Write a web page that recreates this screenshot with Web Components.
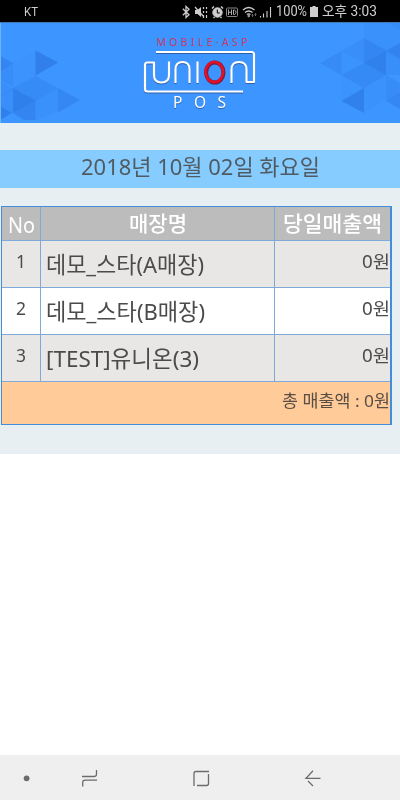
<!DOCTYPE html>
<html lang="ko"><head><meta charset="utf-8"><title>UNION POS</title>
<style>
html,body{margin:0;background:#fff}
body{width:400px;height:800px;overflow:hidden;font-family:"Noto Sans","Noto Sans CJK KR",sans-serif}
</style></head><body><pos-app></pos-app>
<script>
function define(name, html){
  const t=document.createElement('template'); t.innerHTML=html;
  customElements.define(name, class extends HTMLElement{
    constructor(){super();this.attachShadow({mode:'open'}).append(t.content.cloneNode(true));}
  });
}
// One line of text, set to a given width: <pos-line w size>
customElements.define('pos-line', class extends HTMLElement{
  constructor(){super();this.attachShadow({mode:'open'}).innerHTML='<style>:host{display:block;white-space:nowrap;flex:none}span{display:inline-block;transform-origin:0 50%}</style><span><slot></slot></span>';}
  connectedCallback(){
    const w=+this.getAttribute('w'), s=this.shadowRoot.querySelector('span');
    this.style.fontSize=this.getAttribute('size')+'px';
    this.style.lineHeight=this.getAttribute('lh')||'1.4';
    const n=s.getBoundingClientRect().width;
    if(w&&n){this.style.width=w+'px';s.style.transform='scaleX('+(w/n)+')';}
  }
});
define('status-bar', `<style>
:host{display:flex;height:22px;background:#000;color:#cecece;align-items:center;box-sizing:border-box;padding:2px 0 0 24px;font-family:Roboto,"Noto Sans CJK KR",sans-serif}
svg{margin-left:143px;flex:none}.b{margin:0 4px 0 3px}
</style><pos-line w="14" size="12.5">KT</pos-line>
<svg width="94" height="20" viewBox="181 2 94 20" fill="none" stroke="#cecece">
<path d="M182.800 8.800l6.200 6-3 2.700V6.500l3 2.700-6.200 6" stroke-width="1.300"/>
<path d="M195 10h2.500l3.500-3v10l-3.500-3H195z" fill="#cecece" stroke="none"/><path d="M195 7l9 10M203.500 7v2m0 2v2m0 2v3M206.500 7v2m0 2v2m0 2v3" stroke-width="1.200"/>
<circle cx="217.500" cy="12.500" r="4.700" fill="#cecece"/><path d="M212 8.500l2-2M223 8.500l-2-2M213.500 18l1-1M221.500 18l-1-1" stroke-width="1.500"/><path d="M217.300 9.500v3.500h2.500" stroke="#000"/>
<rect x="226.500" y="8" width="11" height="8.500" rx="1" stroke="#888"/><path d="M228.500 9.500v5.500M231.500 9.500v5.500M228.500 12.300h3M233.500 10v4.500h1q1.500-.5 1.500-2.200t-1.500-2.300z" stroke="#aaa"/>
<path d="M243 10q5.700-5 11.500 0M245 12.500q3.700-3 7.500 0M247 14.500q1.700-1.400 3.500 0" stroke-width="1.300"/><circle cx="248.700" cy="16" r=".8"/><path d="M252.500 14v3M251.500 15.500l1-1 1 1M255.500 13v3M254.500 14.500l1 1 1-1" stroke="#888" stroke-width=".7"/>
<path d="M260.500 16v1.500M263.500 13.500v4M267 11v6.500M270.500 7v10.500" stroke-width="1.100"/>
</svg><pos-line style="margin-left:1px" w="31" size="14">100%</pos-line>
<svg class="b" width="8" height="12" viewBox="0 0 8 12" fill="#cecece"><path d="M2.500 0h3v1H8v10H0V1h2.500z"/></svg>
<pos-line w="55" size="14">오후 3:03</pos-line>`);
define('union-banner', `<style>:host{display:block;height:101px}svg{display:block}.logo{filter:drop-shadow(.7px 1px .3px #2f62a8)}</style>
<svg width="400" height="101" viewBox="0 22 400 101">
<rect y="22" width="400" height="101" fill="#3d95ff"/>
<g fill="#1d5fce">
<path d="M35.500 50.500L58 62.500l-22.500 13z" opacity=".4"/>
<path d="M0 56l13 7v24L0 80z" opacity=".13"/><path d="M0 56l13 7-13 9z" opacity=".16"/>
<path d="M13 63l22.500-12v25L13 88z" opacity=".03"/>
<path d="M35.500 76L58 88l-22.500 12.500L13 88z" opacity=".18"/>
<path d="M0 81l13 8-13 8z" opacity=".12"/>
<path d="M13 88l22.500 12.500L13 113z" opacity=".38"/>
<path d="M13 113l22.500-12.500V120H24z" opacity=".28"/>
<path d="M0 96l13-8v25l-13-6z" opacity=".12"/>
<path d="M35.500 100.500L58 88v24l-22.500 8z" opacity=".07"/><path d="M58 88l22 12-22 12.500z" opacity=".23"/>
<path d="M0 106l12 7-12 7z" opacity=".38"/>
<path d="M364 22h36v21l-14 8-22-13z" opacity=".07"/><path d="M386 22h14v8z" opacity=".1"/>
<path d="M364 38l22 12.500V75l-22-12z" opacity=".27"/><path d="M364 63l22-12v24z" opacity=".12"/>
<path d="M400 43v16l-14-8z" opacity=".33"/><path d="M386 51l14 8v16l-14 0z" opacity=".1"/>
<path d="M341.500 51v24L320 63z" opacity=".19"/><path d="M341.500 51L364 38v25z" opacity=".11"/><path d="M341.500 51L364 63l-22.500 12z" opacity=".04"/>
<path d="M341.500 75L364 63l22 12-22 13z" opacity=".2"/>
<path d="M341.500 75v25l22.500-12z" opacity=".04"/><path d="M364 88v25l-22.500-12z" opacity=".37"/>
<path d="M364 88l22-13v25l-22 12z" opacity=".05"/><path d="M386 75l14 8v11l-14 7z" opacity=".16"/><path d="M400 93v16l-14-8z" opacity=".24"/></g>
<path d="M0 22.500h400" stroke="#3d78b8"/><path d="M.5 23v100" stroke="#71b3f5"/>
<text x="156.500" y="45.700" font-family="Noto Sans" font-size="10.500" textLength="91" fill="#c23c6c">MOBILE·ASP</text>
<g class="logo"><g fill="none" stroke-linejoin="round" stroke="#fff" stroke-width="2.200"><path d="M156 52h95.500q2.500 0 2.500 2.500V82h-7.500V69.500q0-7.500-7.500-7.500t-7.500 7.500V83M243 91.500h-95.500q-2.500 0-2.500-2.500V65q0-2.500 2.500-2.500h6.500v12.500q0 7.500 7.500 7.500t7.500-7.500V61.500M175.500 83V69.500q0-7.500 7-7.500t7 7.500V83M197.500 61.500V83"/></g>
<text x="173" y="108.300" font-family="Noto Sans" font-size="15.500" textLength="53" fill="#fff">POS</text></g>
<ellipse cx="214.800" cy="72.500" rx="8.700" ry="10" fill="none" stroke="#7e1a40" stroke-width="4"/><ellipse cx="214.300" cy="72" rx="8.700" ry="10" fill="none" stroke="#e31126" stroke-width="2.700"/>
</svg>`);
define('date-bar', `<style>:host{display:flex;justify-content:center;align-items:flex-start;height:38px;background:#87ccff;color:#4f5b63}</style><pos-line w="239" size="22" lh="32px"><slot></slot></pos-line>`);
define('sales-row', `<style>:host{display:grid;grid-template:46px/38px 233px 1fr;column-gap:1px;height:46px;background:#7ea9d8;border-bottom:1px solid #7ea9d8;color:#4b4b4b}
div{background:var(--row,#e9e7e6);display:flex;align-items:flex-start}.n{justify-content:center}.s{padding-left:5px}.a{justify-content:flex-end}
</style><div class="n"><slot name="no"></slot></div><div class="s"><slot name="store"></slot></div><div class="a"><slot name="amount"></slot></div>`);
define('sales-head', `<style>:host{display:grid;grid-template:33px/38px 233px 1fr;column-gap:1px;height:33px;background:#7ea9d8;border-bottom:1px solid #7ea9d8;color:#fff;font-weight:400}
div{background:#bcbcbc;display:flex;justify-content:center}.k{font-weight:500}</style>
<div><pos-line w="27" size="21" lh="36px">No</pos-line></div><div class="k"><pos-line w="58" size="21" lh="33px">매장명</pos-line></div><div class="k"><pos-line w="99" size="21" lh="33px">당일매출액</pos-line></div>`);
define('sales-table', `<style>:host{display:block;box-sizing:border-box;width:391px;height:219px;margin:18px 0 0 1px;border:1px solid #438ed8;border-right-width:2px;background:#ffcb99}
.t{display:flex;justify-content:flex-end;color:#594d45}</style>
<sales-head></sales-head><slot></slot><div class="t"><pos-line w="108" size="17" lh="37px">총 매출액 : 0원</pos-line></div>`);
define('nav-bar', `<style>:host{display:block;height:45px;background:#efefef}svg{display:block}</style>
<svg width="400" height="45" viewBox="0 755 400 45" fill="none" stroke="#6b6b6b" stroke-width="1.300"><circle cx="26.600" cy="778.300" r="2.900" fill="#6b6b6b" stroke="none"/>
<path d="M82 776.500h12q2.500 0 2.500-2.500v-4M97 780.200H85q-2.300 0-2.300 2.500v3.800M209 771.500h-13q-2 0-2 2V786M197 785.500h9.500q2 0 2-2V774M320.500 778.300h-14.500l7-7.500M308 781l5 5"/></svg>`);
define('pos-app', `<style>:host{display:flex;flex-direction:column;width:400px;height:800px}main{box-sizing:border-box;height:331px;background:#e8eff3;padding-top:27px;font-weight:400}.gap{flex:1;background:#fff}</style>
<status-bar></status-bar><union-banner></union-banner><main><date-bar>2018년 10월 02일 화요일</date-bar>
<sales-table>
<sales-row><pos-line slot="no" w="10" size="18" lh="41px">1</pos-line><pos-line slot="store" w="158" size="22.5" lh="47px">데모_스타(A매장)</pos-line><pos-line slot="amount" w="28" size="17.5" lh="41px">0원</pos-line></sales-row>
<sales-row style="--row:#fff"><pos-line slot="no" w="10" size="18" lh="41px">2</pos-line><pos-line slot="store" w="159" size="22.5" lh="47px">데모_스타(B매장)</pos-line><pos-line slot="amount" w="28" size="17.5" lh="41px">0원</pos-line></sales-row>
<sales-row><pos-line slot="no" w="10" size="18" lh="41px">3</pos-line><pos-line slot="store" w="153" size="22.5" lh="47px">[TEST]유니온(3)</pos-line><pos-line slot="amount" w="28" size="17.5" lh="41px">0원</pos-line></sales-row>
</sales-table></main><div class="gap"></div><nav-bar></nav-bar>`);
</script></body></html>
